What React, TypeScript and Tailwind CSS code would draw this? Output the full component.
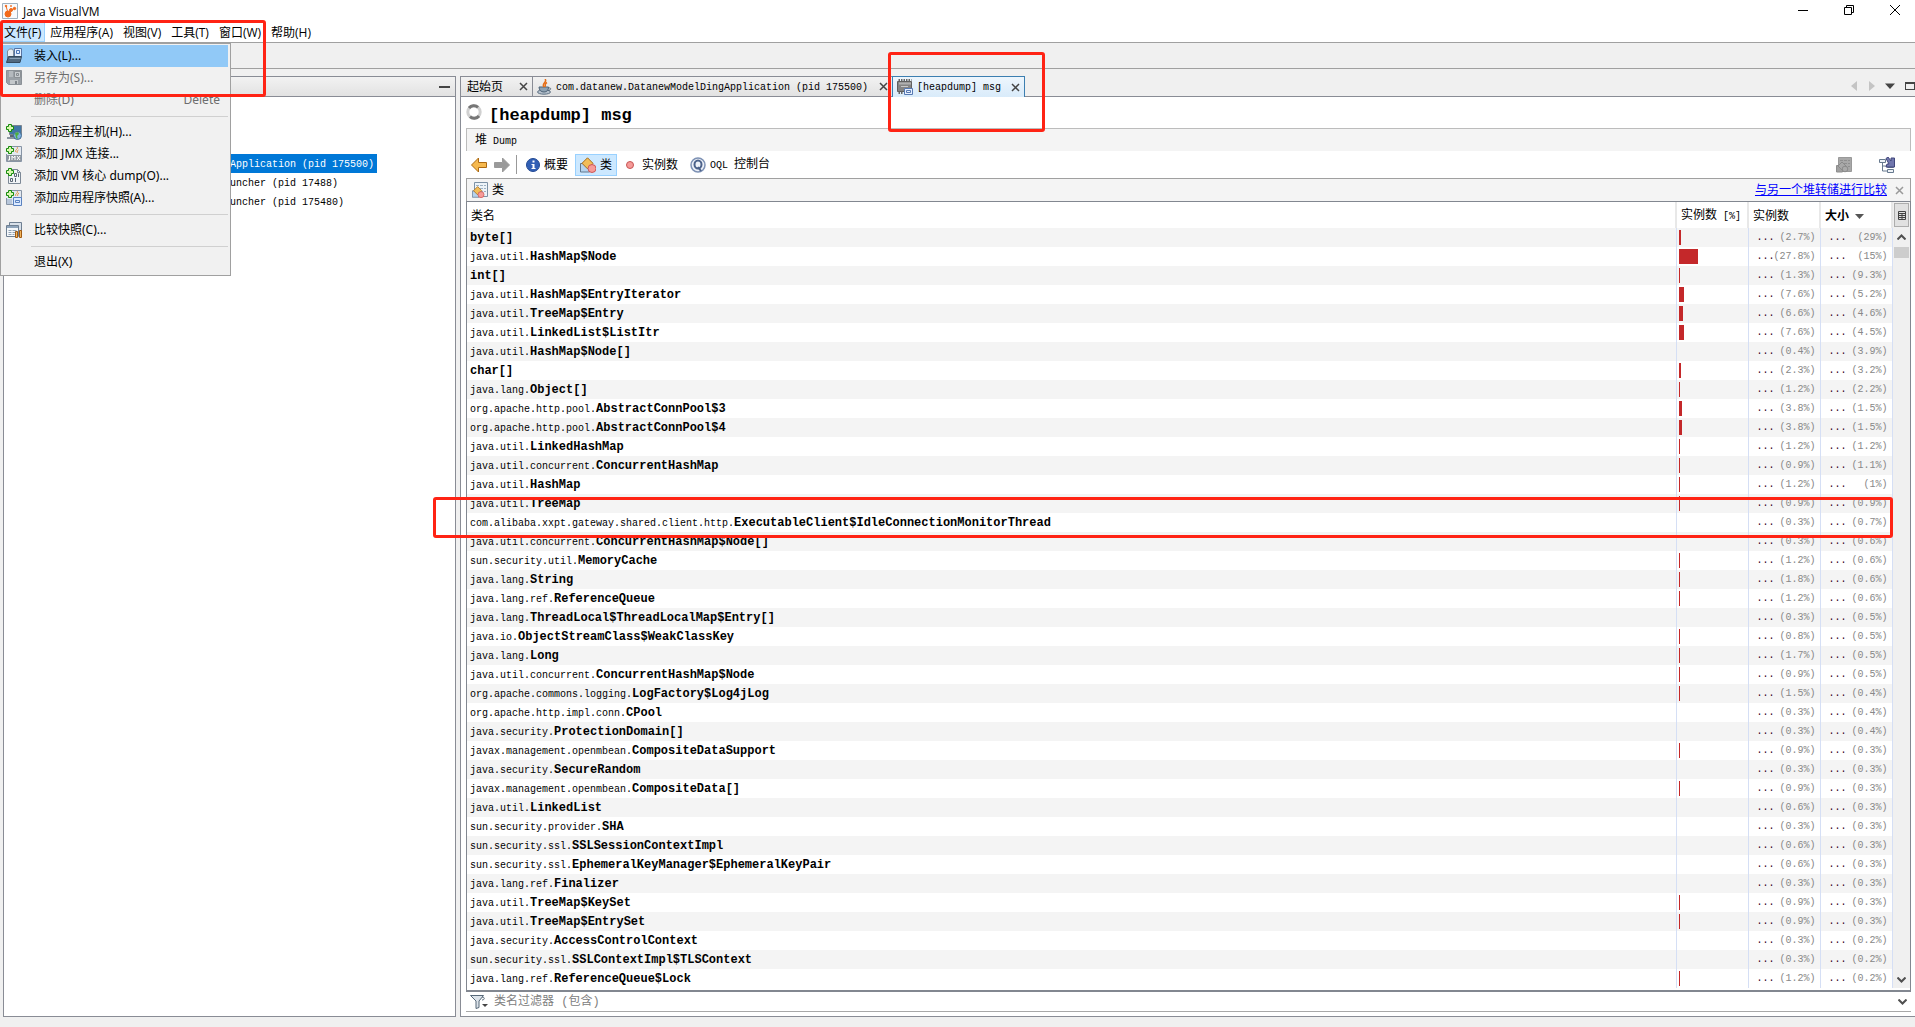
import React from 'react';
import clsx from 'clsx';

interface ClassRow {
  pkg: string;
  name: string;
  count: number;
  size: string;
}

const row = (pkg: string, name: string, count: number, size: string): ClassRow => ({ pkg, name, count, size });

const rows: ClassRow[] = [
  row('', 'byte[]', 2.7, '29'),
  row('java.util.', 'HashMap$Node', 27.8, '15'),
  row('', 'int[]', 1.3, '9.3'),
  row('java.util.', 'HashMap$EntryIterator', 7.6, '5.2'),
  row('java.util.', 'TreeMap$Entry', 6.6, '4.6'),
  row('java.util.', 'LinkedList$ListItr', 7.6, '4.5'),
  row('java.util.', 'HashMap$Node[]', 0.4, '3.9'),
  row('', 'char[]', 2.3, '3.2'),
  row('java.lang.', 'Object[]', 1.2, '2.2'),
  row('org.apache.http.pool.', 'AbstractConnPool$3', 3.8, '1.5'),
  row('org.apache.http.pool.', 'AbstractConnPool$4', 3.8, '1.5'),
  row('java.util.', 'LinkedHashMap', 1.2, '1.2'),
  row('java.util.concurrent.', 'ConcurrentHashMap', 0.9, '1.1'),
  row('java.util.', 'HashMap', 1.2, '1'),
  row('java.util.', 'TreeMap', 0.9, '0.9'),
  row('com.alibaba.xxpt.gateway.shared.client.http.', 'ExecutableClient$IdleConnectionMonitorThread', 0.3, '0.7'),
  row('java.util.concurrent.', 'ConcurrentHashMap$Node[]', 0.3, '0.6'),
  row('sun.security.util.', 'MemoryCache', 1.2, '0.6'),
  row('java.lang.', 'String', 1.8, '0.6'),
  row('java.lang.ref.', 'ReferenceQueue', 1.2, '0.6'),
  row('java.lang.', 'ThreadLocal$ThreadLocalMap$Entry[]', 0.3, '0.5'),
  row('java.io.', 'ObjectStreamClass$WeakClassKey', 0.8, '0.5'),
  row('java.lang.', 'Long', 1.7, '0.5'),
  row('java.util.concurrent.', 'ConcurrentHashMap$Node', 0.9, '0.5'),
  row('org.apache.commons.logging.', 'LogFactory$Log4jLog', 1.5, '0.4'),
  row('org.apache.http.impl.conn.', 'CPool', 0.3, '0.4'),
  row('java.security.', 'ProtectionDomain[]', 0.3, '0.4'),
  row('javax.management.openmbean.', 'CompositeDataSupport', 0.9, '0.3'),
  row('java.security.', 'SecureRandom', 0.3, '0.3'),
  row('javax.management.openmbean.', 'CompositeData[]', 0.9, '0.3'),
  row('java.util.', 'LinkedList', 0.6, '0.3'),
  row('sun.security.provider.', 'SHA', 0.3, '0.3'),
  row('sun.security.ssl.', 'SSLSessionContextImpl', 0.6, '0.3'),
  row('sun.security.ssl.', 'EphemeralKeyManager$EphemeralKeyPair', 0.6, '0.3'),
  row('java.lang.ref.', 'Finalizer', 0.3, '0.3'),
  row('java.util.', 'TreeMap$KeySet', 0.9, '0.3'),
  row('java.util.', 'TreeMap$EntrySet', 0.9, '0.3'),
  row('java.security.', 'AccessControlContext', 0.3, '0.2'),
  row('sun.security.ssl.', 'SSLContextImpl$TLSContext', 0.3, '0.2'),
  row('java.lang.ref.', 'ReferenceQueue$Lock', 1.2, '0.2'),
];

const Svg: React.FC<{ children: React.ReactNode; className?: string }> = ({ children, className }) => (
  <svg viewBox="0 0 16 16" className={clsx('h-4 w-4 shrink-0', className)} fill="none" aria-hidden="true">
    {children}
  </svg>
);

const Plus = () => <path d="M2.500.5h3v2h2v3h-2v2h-3v-2h-2v-3h2z" fill="#d9f7b0" stroke="#168a0c" />;

const LoadIcon = () => (
  <Svg>
    <path d="M1.500 3l2-2h3l1 2v7h-6z" fill="#e8edf3" stroke="#7d8b99" />
    <path d="M8.500.5h7v8h-7z" fill="#e4efff" stroke="#5774a3" />
    <path d="M10.500 2.500h3v3h-3z" stroke="#4b75b5" />
    <path d="M.5 14.500l2-6h13l-1.500 6z" fill="#51687f" stroke="#34495d" />
    <path d="M3.500 10.500h11" stroke="#8aa0b5" />
  </Svg>
);

const SaveIcon = () => (
  <Svg>
    <path d="M.5.5h15v14h-13l-2-2z" fill="#9aa0a6" stroke="#8b9197" />
    <path d="M3 1h4v6H3z" fill="#b4b9be" />
    <path d="M8.500 1.500h6v6h-6z" fill="#c8ccd0" stroke="#8b9095" />
    <path d="M10.500 3.500h2v2h-2z" stroke="#858a90" />
    <path d="M4 10h8v4H4z" fill="#c4c8cb" />
    <path d="M9 11h2v3H9z" fill="#7e848a" />
  </Svg>
);

const HostIcon = () => (
  <Svg>
    <path d="M3.500 1.500h12v9h-12z" fill="#3f77a6" stroke="#7a8490" />
    <path d="M1 13h8v2H1z" fill="#8b95a0" />
    <path d="M4 11h4v2H4z" fill="#5b6570" />
    <circle cx="11.500" cy="11.500" r="4" fill="#7fb0de" stroke="#41698f" />
    <path d="M9 9l3-1 1 2-2 2 1 3-2-1z" fill="#4caf3f" />
    <Plus />
  </Svg>
);

const JmxIcon = () => (
  <Svg>
    <path d="M5 .5h10.500v15H.5V8" fill="#e3e9f1" stroke="#8794a5" />
    <path d="M11 1c2 2-3 3-1 5M12.500 4c-2 1-1 2-1.500 3" stroke="#e8913a" />
    <path d="M1 9h14v6H1z" fill="#8f979f" />
    <path d="M3.500 10v4H2M6 14v-4l1.500 2L9 10v4M11 10l3 4M14 10l-3 4" stroke="#fff" />
    <Plus />
  </Svg>
);

const CoreIcon = () => (
  <Svg>
    <path d="M2.500 1.500h9l3 3v11h-12z" fill="#f1f4f7" stroke="#7c8896" />
    <path d="M11.500 1.500v3h3" stroke="#7c8896" />
    <path d="M8.500 5.500h2v3h-2zM12.500 5.500V9M4.500 10.500h2v3h-2zM9.500 10v4" stroke="#5a6674" />
    <Plus />
  </Svg>
);

const AppSnapIcon = () => (
  <Svg>
    <path d="M5 .5h10.500v14H.5V8" fill="#e3e9f1" stroke="#8794a5" />
    <path d="M11 1c2 2-3 3-1 5M13 3c-2 1-1 2-1.500 3" stroke="#e8913a" />
    <path d="M1 9h5v5H1z" fill="#b7c6da" />
    <path d="M7.500 7.500h8v8h-8z" fill="#dceaff" stroke="#5a82c0" />
    <path d="M9.500 10.500h4v2h-4z" stroke="#5a82c0" />
    <Plus />
  </Svg>
);

const CompareIcon = () => (
  <Svg>
    <path d="M3.500.5h12v11h-12z" fill="#d8e0e9" stroke="#6e7f92" />
    <path d="M.5 3.500h12v11H.5z" fill="#f5f8fb" stroke="#6e7f92" />
    <path d="M1 5h11" stroke="#8ea4bb" strokeWidth="2" />
    <path d="M2.500 8.500h3m1 0h4M2.500 10.500h3m1 0h3M2.500 12.500h3m1 0h2" stroke="#8fa0b2" />
    <path d="M9.500 9.500h2v6h-2zM13.500 8.500h2v7h-2z" fill="#f0b35b" stroke="#a05a12" />
  </Svg>
);

const JavaIcon = () => (
  <Svg>
    <ellipse cx="7" cy="13" rx="6.500" ry="2.200" fill="#b4c0cc" stroke="#5f7183" />
    <path d="M2 8h9.500c0 3-1.500 5-4.500 5s-5-2-5-5z" fill="#8fa2b3" stroke="#4f6478" />
    <path d="M11.500 9c3-.5 3 2-.5 2.500" stroke="#4f6478" />
    <path d="M8 0c3 3-4 4-1 8M10 3.500C7 5 9 6 8 8" stroke="#e76f18" strokeWidth="1.500" />
  </Svg>
);

const HeapIcon = () => (
  <Svg>
    <path d="M.5 2.500h14v10H.5z" fill="#848484" stroke="#606060" />
    <path d="M1.500 1h13M1.500 14h5" stroke="#666" strokeWidth="2" strokeDasharray="1.500 1" />
    <path d="M2 4.500h12" stroke="#b0b0b0" strokeWidth="2" />
    <path d="M4 7.500h7" stroke="#c8c8c8" />
    <path d="M7.500 9.500h8v6h-8z" fill="#e7f0ff" stroke="#5679b2" />
    <path d="M9.500 11.500h4v2h-4z" stroke="#5679b2" />
  </Svg>
);

const Shapes = () => (
  <>
    <path d="M.5 6.500h9v8.500h-9z" fill="#b5d3ee" stroke="#61788f" />
    <path d="M7.500.8l5.500 5.500-5.500 5.500L2 6.300z" fill="#f2bd58" stroke="#a56b1b" />
    <circle cx="12" cy="11.500" r="4" fill="#f79b98" stroke="#cc5756" />
  </>
);

const ClassesIcon = ({ gray = false }: { gray?: boolean }) => (
  <Svg>
    <path d="M2.500.5h13v14h-13z" fill={gray ? '#a8a8a8' : '#edf3f8'} stroke={gray ? '#999' : '#7c91a5'} />
    <path d="M4 3.500h10M4 6.500h10M4 9.500h10" stroke={gray ? '#8f8f8f' : '#9eb1c2'} strokeDasharray="3 1" />
    {gray ? (
      <>
        <path d="M.5 8.500h6v6.500h-6z" fill="#a0a0a0" stroke="#8e8e8e" />
        <path d="M6 5l4 4-4 4-4-4z" fill="#a8a8a8" stroke="#8a8a8a" />
        <circle cx="9" cy="12" r="2.800" fill="#aaa" stroke="#8a8a8a" />
      </>
    ) : (
      <g transform="translate(0 4) scale(.75)">
        <Shapes />
      </g>
    )}
  </Svg>
);

const Cross: React.FC<{ label: string; light?: boolean }> = ({ label, light }) => (
  <button type="button" aria-label={label} className="shrink-0">
    <svg viewBox="0 0 9 9" className="h-[9px] w-[9px]">
      <path d="M1 1l7 7M8 1L1 8" stroke={light ? '#999' : '#444'} strokeWidth="1.500" />
    </svg>
  </button>
);

const Mono: React.FC<{ children: React.ReactNode }> = ({ children }) => (
  <span className="whitespace-pre font-['Liberation_Mono',monospace] text-[10px]">{children}</span>
);

const menus = ['文件(F)', '应用程序(A)', '视图(V)', '工具(T)', '窗口(W)', '帮助(H)'];

const MenuItem: React.FC<{ label: string; icon?: React.ReactNode; state?: 'active' | 'disabled'; shortcut?: string }> = ({
  label,
  icon,
  state,
  shortcut,
}) => (
  <button
    type="button"
    role="menuitem"
    disabled={state === 'disabled'}
    className={clsx(
      'flex h-[22px] w-full items-center pl-[3px] pr-2 text-left',
      state === 'active' && 'bg-[#91c9f7]',
      state === 'disabled' && 'text-[#6d6d6d]'
    )}
  >
    <span className="flex w-7 shrink-0">{icon}</span>
    <span className="grow">{label}</span>
    {shortcut && <span>{shortcut}</span>}
  </button>
);

const MenuLine = () => (
  <div role="separator" className="flex h-[10px] items-center pl-7">
    <div className="h-px w-full bg-[#d0d0d0]" />
  </div>
);

const FileMenu = () => (
  <div
    role="menu"
    className="absolute left-0 top-[43px] z-10 w-[231px] border border-[#a0a0a0] bg-[#f1f1f1] px-[2px] pb-[2px] pt-px font-['Noto_Sans','Noto_Sans_CJK_SC',sans-serif]"
  >
    <MenuItem label="装入(L)..." icon={<LoadIcon />} state="active" />
    <MenuItem label="另存为(S)..." icon={<SaveIcon />} state="disabled" />
    <MenuItem label="删除(D)" state="disabled" shortcut="Delete" />
    <MenuLine />
    <MenuItem label="添加远程主机(H)..." icon={<HostIcon />} />
    <MenuItem label="添加 JMX 连接..." icon={<JmxIcon />} />
    <MenuItem label="添加 VM 核心 dump(O)..." icon={<CoreIcon />} />
    <MenuItem label="添加应用程序快照(A)..." icon={<AppSnapIcon />} />
    <MenuLine />
    <MenuItem label="比较快照(C)..." icon={<CompareIcon />} />
    <MenuLine />
    <MenuItem label="退出(X)" />
  </div>
);

const TitleBar = () => (
  <header className="flex h-[22px] items-center gap-[5px] pl-[2px] pr-[15px]">
    <svg viewBox="0 0 16 16" className="h-4 w-4" aria-hidden="true">
      <path d="M.5.5h15v15H.5z" fill="#f8fafc" stroke="#9fb0be" />
      <g fill="#f26a1b" stroke="#f26a1b">
        <circle cx="6" cy="11" r="3" />
        <circle cx="9" cy="7" r="1.500" />
        <circle cx="12.500" cy="5.500" r="1.200" />
        <circle cx="4" cy="3" r=".8" />
        <circle cx="9" cy="3" r=".5" />
        <path d="M4 3l2 7M9 7l3-1.500M6 10l3-3" />
      </g>
    </svg>
    <h1 className="grow pt-[2px]">Java VisualVM</h1>
    <div className="flex items-center gap-9 pb-[2px]">
      <button type="button" aria-label="最小化">
        <svg viewBox="0 0 10 10" className="h-[10px] w-[10px]"><path d="M0 5.500h10" stroke="#000" /></svg>
      </button>
      <button type="button" aria-label="还原">
        <svg viewBox="0 0 10 10" className="h-[10px] w-[10px]" fill="none" stroke="#000">
          <path d="M.5 2.500h7v7h-7zM2.500 2.500v-2h7v7h-2" />
        </svg>
      </button>
      <button type="button" aria-label="关闭">
        <svg viewBox="0 0 10 10" className="h-[10px] w-[10px]"><path d="M0 0l10 10M10 0L0 10" stroke="#000" /></svg>
      </button>
    </div>
  </header>
);

const treeItems = [
  { text: 'Application (pid 175500)', selected: true },
  { text: 'uncher (pid 17488)', selected: false },
  { text: 'uncher (pid 175480)', selected: false },
];

const Sidebar = () => (
  <aside className="flex w-[453px] shrink-0 flex-col border border-[#898c95] bg-white">
    <div className="flex h-[20px] items-center justify-end border-b border-[#898c95] bg-linear-to-b from-[#f2f2f2] to-[#e2e2e2] pr-[5px]">
      <button type="button" aria-label="最小化窗口" className="h-[2px] w-[11px] bg-[#444]" />
    </div>
    <ul className="mt-[57px] pl-[226px] font-['Liberation_Mono',monospace] text-[10px]">
      {treeItems.map(item => (
        <li
          key={item.text}
          className={clsx('h-[19px] w-fit pr-[3px] pt-px leading-[19px]', item.selected && 'bg-[#0078d7] text-white')}
        >
          {item.text}
        </li>
      ))}
    </ul>
  </aside>
);

const TabStrip = () => (
  <div className="flex h-[21px] border-b border-[#898c95] bg-[#f0f0f0]">
    <div className="flex w-[71px] items-center justify-between border-t border-[#898c95] bg-linear-to-b from-[#f2f2f2] to-[#e2e2e2] pl-[6px] pr-1">
      <span>起始页</span>
      <Cross label="关闭起始页" />
    </div>
    <div className="flex w-[360px] items-center border-l border-t border-[#898c95] bg-linear-to-b from-[#f2f2f2] to-[#e2e2e2] pl-1 pr-1">
      <JavaIcon />
      <span className="grow pl-[3px]"><Mono>com.datanew.DatanewModelDingApplication (pid 175500)</Mono></span>
      <Cross label="关闭应用程序" />
    </div>
    <div className="-mb-px flex w-[133px] items-center border-x border-t border-[#3c7fb1] bg-linear-to-b from-[#eef6fd] to-[#d9ebfa] pl-1 pr-1">
      <HeapIcon />
      <span className="grow pl-1"><Mono>[heapdump] msg</Mono></span>
      <Cross label="关闭 heapdump" />
    </div>
    <div className="flex grow items-center justify-end gap-[10px]">
      <button type="button" aria-label="向左滚动">
        <svg viewBox="0 0 6 10" className="h-[10px] w-[6px]"><path d="M6 0v10L0 5z" fill="#c4c4c4" /></svg>
      </button>
      <button type="button" aria-label="向右滚动" className="pl-[2px]">
        <svg viewBox="0 0 6 10" className="h-[10px] w-[6px]"><path d="M0 0v10l6-5z" fill="#c4c4c4" /></svg>
      </button>
      <button type="button" aria-label="文档列表">
        <svg viewBox="0 0 10 6" className="h-[6px] w-[10px]"><path d="M0 .5h10L5 6z" fill="#444" /></svg>
      </button>
      <button type="button" aria-label="最大化窗口" className="h-[8px] w-[10px] border border-t-2 border-[#444]" />
    </div>
  </div>
);

const Arrow = ({ forward = false }: { forward?: boolean }) => (
  <Svg>
    <path
      d={forward ? 'M15.500 8L8.500 1v4.500H.5v5h8V15z' : 'M.5 8L7.500 1v4.500h8v5h-8V15z'}
      fill={forward ? '#9a9a9a' : '#f6b94f'}
      stroke={forward ? '#9a9a9a' : '#ad6a12'}
    />
  </Svg>
);

const Toolbar = () => (
  <div className="flex h-[27px] items-center pl-[5px] pr-4">
    <button type="button" aria-label="后退"><Arrow /></button>
    <button type="button" aria-label="前进" className="ml-[7px]"><Arrow forward /></button>
    <div className="ml-[6px] h-[19px] w-px bg-[#999]" />
    <button type="button" className="ml-2 flex items-center gap-[3px]">
      <Svg>
        <circle cx="8" cy="8" r="6.500" fill="#315fb5" stroke="#234a94" />
        <path d="M7.500 3.500h2v2h-2zM6.500 7h3v4h1v1h-4v-1h1V8h-1z" fill="#fff" />
      </Svg>
      概要
    </button>
    <button
      type="button"
      aria-pressed="true"
      className="ml-[7px] flex h-[22px] items-center gap-1 border border-[#99d1ff] bg-[#cce8ff] px-1"
    >
      <Svg><Shapes /></Svg>
      类
    </button>
    <button type="button" className="ml-[5px] flex items-center gap-1">
      <Svg><circle cx="8" cy="8" r="3.500" fill="#f59a98" stroke="#c75554" /></Svg>
      实例数
    </button>
    <button type="button" className="ml-[12px] flex items-center gap-1">
      <Svg>
        <circle cx="8" cy="8" r="7" fill="#edf1f8" stroke="#7d91b4" strokeWidth="1.500" />
        <ellipse cx="8" cy="7.500" rx="3.500" ry="4" stroke="#4c628a" strokeWidth="2" />
        <path d="M8 10l3 4" stroke="#4c628a" strokeWidth="2" />
      </Svg>
      <span><Mono>OQL </Mono>控制台</span>
    </button>
    <div className="ml-auto flex gap-[27px]">
      <button type="button" aria-label="类视图" disabled><ClassesIcon gray /></button>
      <button type="button" aria-label="显示层次结构">
        <Svg>
          <path d="M.5 2.500h6v3h-6zM8.500 7.500h6v3h-6zM8.500 12.500h6v3h-6z" fill="#eef2f7" stroke="#66798e" />
          <path d="M3.500 6v8h5M3.500 9h5" stroke="#66798e" />
          <path d="M7 1.500L9 0l3 4V1h3.500v9H7l1-3h2z" fill="#7076ad" stroke="#41467c" />
        </Svg>
      </button>
    </div>
  </div>
);

const headCell = 'border-r-2 border-[#e8e8e8] p-0 pt-[2px] text-left font-normal';
const cell = 'h-[19px] whitespace-nowrap border-r border-[#d5dff5] p-0';

const NumberCell: React.FC<{ value: string }> = ({ value }) => (
  <td className={cell}>
    <div className="flex justify-between pl-2 pr-1 text-[10px] text-[#888]">
      <span className="text-[#300018]">...</span>
      <span className="-ml-2">({value}%)</span>
    </div>
  </td>
);

const ClassTable = () => (
  <table className="grow table-fixed border-collapse self-start">
    <colgroup>
      <col />
      <col className="w-[72px]" />
      <col className="w-[72px]" />
      <col className="w-[72px]" />
    </colgroup>
    <thead>
      <tr className="h-[26px]">
        <th scope="col" className={clsx(headCell, 'pl-1')}>类名</th>
        <th scope="col" className={clsx(headCell, 'pl-1 whitespace-nowrap')}>实例数<Mono> [%]</Mono></th>
        <th scope="col" className={clsx(headCell, 'pl-1')}>实例数</th>
        <th scope="col" aria-sort="descending" className={clsx(headCell, 'pl-1')}>
          <span className="flex items-center gap-[6px] font-bold">
            大小
            <svg viewBox="0 0 9 5" className="h-[5px] w-[9px]"><path d="M0 0h9L4.500 5z" fill="#555" /></svg>
          </span>
        </th>
      </tr>
    </thead>
    <tbody className="font-['Liberation_Mono',monospace] leading-4">
      {rows.map(r => (
        <tr key={r.pkg + r.name} className="odd:bg-[#f4f4f4]">
          <td className={clsx(cell, 'pl-[3px] align-bottom text-[10px]')}>
            {r.pkg}
            <b className="text-[12px]">{r.name}</b>
          </td>
          <td className={cell}>
            <div className="ml-[2px] h-[15px] bg-[#c4282a]" style={{ width: Math.round(r.count * 0.68) }} />
          </td>
          <NumberCell value={String(r.count)} />
          <NumberCell value={r.size} />
        </tr>
      ))}
    </tbody>
  </table>
);

const Chevron = ({ up = false }: { up?: boolean }) => (
  <svg viewBox="0 0 9 6" className="h-[6px] w-[9px]" fill="none" aria-hidden="true">
    <path d={up ? 'M.5 5.500l4-4 4 4' : 'M.5.5l4 4 4-4'} stroke="#505050" strokeWidth="2" />
  </svg>
);

const ScrollBar = () => (
  <div className="flex w-[17px] shrink-0 flex-col items-center bg-[#f0f0f0]">
    <button
      type="button"
      aria-label="选择列"
      className="mt-px flex h-6 w-[15px] items-center justify-center border border-[#adadad] bg-[#e1e1e1]"
    >
      <svg viewBox="0 0 8 9" className="h-[9px] w-2" fill="none" stroke="#444">
        <path d="M.5.5h7v8h-7zM.5 2.500h7M.5 4.500h7M.5 6.500h7M4 2v7" />
      </svg>
    </button>
    <button type="button" aria-label="向上滚动" className="flex h-5 items-center"><Chevron up /></button>
    <div className="h-[11px] w-[15px] bg-[#cdcdcd]" />
    <button type="button" aria-label="向下滚动" className="mt-auto flex h-[17px] items-center"><Chevron /></button>
  </div>
);

const HeapDumpView = () => (
  <main className="flex grow flex-col border-b border-l border-[#898c95] bg-white">
    <TabStrip />
    <div className="flex grow flex-col pl-[5px] pr-1">
      <div className="flex h-[31px] items-center gap-[7px] pt-[6px]">
        <Svg className="mb-2">
          <circle cx="8" cy="8" r="6.200" stroke="#d0d0d0" strokeWidth="3" />
          <path d="M3 4a6.200 6.200 0 0 1 9-.7M13 12a6.200 6.200 0 0 1-9 .7" stroke="#767676" strokeWidth="3" />
        </Svg>
        <h2 className="font-['Liberation_Mono',monospace] text-[17px] font-bold">[heapdump] msg</h2>
      </div>
      <div className="h-[23px] border-x border-t border-[#bcbcbc] bg-[#f4f4f4] pl-2 leading-[22px]">
        堆<Mono> Dump</Mono>
      </div>
      <Toolbar />
      <div className="flex h-[23px] items-center border border-b-0 border-[#a0a0a0] bg-[#f4f4f4] pl-[5px] pr-[6px]">
        <ClassesIcon />
        <span className="grow pl-1">类</span>
        <a href="#compare" className="pr-2 text-[#0000ff] underline">与另一个堆转储进行比较</a>
        <Cross label="关闭类视图" light />
      </div>
      <div className="flex border border-b-2 border-[#828790] pb-[2px]">
        <ClassTable />
        <ScrollBar />
      </div>
      <div className="flex h-5 items-center gap-[6px] border-b border-[#a8a8a8] pl-1 pr-1">
        <svg viewBox="0 0 18 16" className="h-4 w-[18px]" fill="none" aria-hidden="true">
          <path d="M.5 1.500h13L9 7v6.500l-3 1V7z" fill="#dce3ea" stroke="#566879" />
          <path d="M12 3c3 0 3 3 0 3" stroke="#566879" />
          <path d="M12 10h6l-3 3z" fill="#444" />
        </svg>
        <input
          type="text"
          aria-label="类名过滤器"
          placeholder="类名过滤器 (包含)"
          className="grow bg-transparent font-['Liberation_Mono','Noto_Sans_CJK_SC',monospace] outline-none placeholder:text-[#808080]"
        />
        <button type="button" aria-label="展开过滤器"><Chevron /></button>
      </div>
    </div>
  </main>
);

export default function App() {
  return (
    <div className="relative flex min-h-screen flex-col bg-white font-['Open_Sans','Noto_Sans_CJK_SC',sans-serif] text-[12px] leading-4 text-black">
      <TitleBar />
      <nav className="flex h-5 items-center">
        {menus.map((label, i) => (
          <button
            key={label}
            type="button"
            className={clsx(
              'h-full border pt-[2px]',
              i === 0 ? 'border-[#99d1ff] bg-[#cce8ff] px-[3px]' : 'border-transparent px-1'
            )}
          >
            {label}
          </button>
        ))}
      </nav>
      <FileMenu />
      <div className="h-[27px] border-y border-[#a0a0a0] bg-[#f0f0f0]" />
      <div className="flex grow bg-[#f0f0f0] pb-[10px] pl-[3px] pt-[7px]">
        <Sidebar />
        <div className="w-1 shrink-0" />
        <HeapDumpView />
      </div>

      {/* Highlight frames */}
      <div className="pointer-events-none absolute left-0 top-5 z-20 h-[77px] w-[266px] rounded-[3px] border-3 border-[#ff2314]" />
      <div className="pointer-events-none absolute left-[888px] top-[52px] z-20 h-[80px] w-[157px] rounded-[3px] border-3 border-[#ff2314]" />
      <div className="pointer-events-none absolute left-[433px] right-[22px] top-[497px] z-20 h-[41px] rounded-[3px] border-3 border-[#ff2314]" />
    </div>
  );
}
